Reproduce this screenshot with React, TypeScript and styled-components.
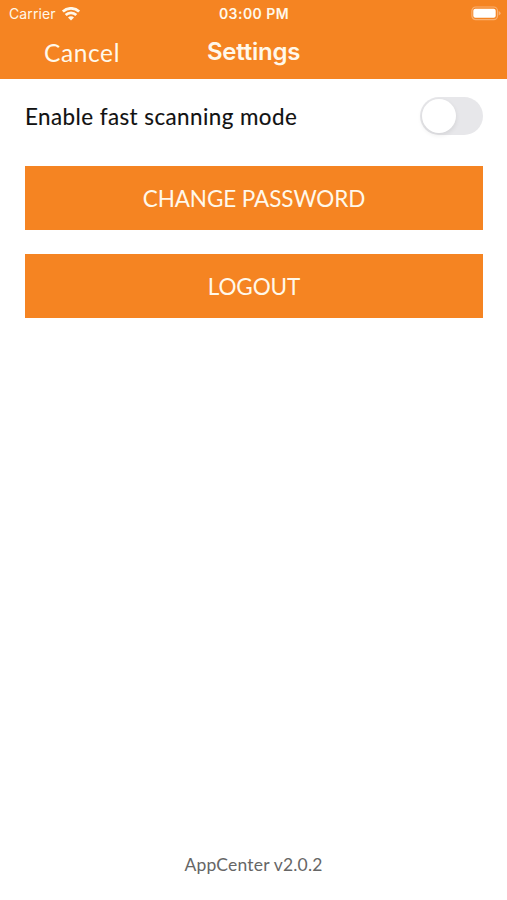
import React, { useState } from "react";
import styled, { createGlobalStyle } from "styled-components";

const ORANGE = "#f58422";

const GlobalStyle = createGlobalStyle`
  *, *::before, *::after { box-sizing: border-box; }
  body { margin: 0; background: #fff; }
`;

const Screen = styled.div`
  display: flex;
  flex-direction: column;
  width: 507px;
  height: 900px;
  background: #fff;
  font-family: Lato, "Open Sans", sans-serif;
`;

const Header = styled.header`
  height: 79px;
  background: ${ORANGE};
  color: #fff8ea;
  font-family: Inter, sans-serif;
`;

const Bar = styled.div<{ $height: number }>`
  display: grid;
  grid-template-columns: 1fr auto 1fr;
  align-items: center;
  height: ${(p) => p.$height}px;
`;

const Carrier = styled.div`
  display: flex;
  align-items: center;
  gap: 6px;
  padding-left: 9px;
  font-size: 14px;
  letter-spacing: 0.1px;
`;

const Clock = styled.div`
  padding-left: 1px;
  font-size: 14px;
  font-weight: 600;
  letter-spacing: 0.45px;
`;

const Power = styled.div`
  display: flex;
  justify-content: flex-end;
  padding-right: 6px;
`;

const CancelButton = styled.button`
  justify-self: start;
  margin: 1px 0 0 44px;
  padding: 0;
  border: 0;
  background: none;
  color: inherit;
  font: 400 24.5px/30px Lato, sans-serif;
  letter-spacing: 0.6px;
`;

const Title = styled.h1`
  margin: 0;
  font-size: 24px;
  line-height: 30px;
  font-weight: 600;
  letter-spacing: -0.25px;
`;

const Content = styled.main`
  display: flex;
  flex: 1;
  flex-direction: column;
  gap: 24px;
  padding: 18px 24px 0 25px;
`;

const SettingRow = styled.label`
  display: flex;
  align-items: center;
  justify-content: space-between;
  height: 38px;
  margin-bottom: 7px;
  color: #111;
`;

const SettingName = styled.span`
  font-size: 22.4px;
  letter-spacing: 0.44px;
  -webkit-text-stroke: 0.15px #111;
`;

const Track = styled.button<{ $on: boolean }>`
  display: flex;
  justify-content: ${(p) => (p.$on ? "flex-end" : "flex-start")};
  width: 63px;
  height: 38px;
  padding: 2px;
  border: 0;
  border-radius: 19px;
  background: ${(p) => (p.$on ? ORANGE : "#e7e7ea")};
`;

const Knob = styled.span`
  width: 34px;
  height: 34px;
  border-radius: 50%;
  background: #fff;
  box-shadow: 0 2px 5px rgba(0, 0, 0, 0.09);
`;

const ActionButton = styled.button`
  height: 64px;
  padding: 1px 0 0;
  border: 0;
  background: ${ORANGE};
  color: #fff8ea;
  font: 400 22.5px/63px Lato, sans-serif;
  letter-spacing: -0.1px;
`;

const Version = styled.footer`
  height: 48px;
  color: #666;
  font-size: 17.5px;
  line-height: 26px;
  letter-spacing: 0.2px;
  text-align: center;
`;

const WifiIcon = () => (
  <svg width="18" height="14" viewBox="0 0 18 14" fill="none" stroke="#fff8ea" strokeWidth="2.7">
    <path d="M0.9 4.6A11.6 11.6 0 0 1 17.1 4.6" />
    <path d="M3.7 8A7.5 7.5 0 0 1 14.3 8" />
    <path d="M9 13.6L6 10.6A4.2 4.2 0 0 1 12 10.6Z" fill="#fff8ea" stroke="none" />
  </svg>
);

const BatteryIcon = () => (
  <svg width="30" height="15" viewBox="0 0 30 15">
    <rect x="0.9" y="1" width="25.6" height="12.6" rx="3.8" fill="none" stroke="#f9b072" strokeWidth="1.2" />
    <rect x="2.3" y="2.8" width="22.4" height="9" rx="2" fill="#fff" />
    <path d="M27.7 5.1Q29.6 5.9 29.6 7.3T27.7 9.5Z" fill="#f9b072" />
  </svg>
);

export default function App() {
  const [fastScan, setFastScan] = useState(false);
  return (
    <>
      <GlobalStyle />
      <Screen>
        <Header>
          <Bar $height={27}>
            <Carrier>
              Carrier <WifiIcon />
            </Carrier>
            <Clock>03:00 PM</Clock>
            <Power>
              <BatteryIcon />
            </Power>
          </Bar>
          <Bar $height={50}>
            <CancelButton>Cancel</CancelButton>
            <Title>Settings</Title>
          </Bar>
        </Header>
        <Content>
          <SettingRow>
            <SettingName>Enable fast scanning mode</SettingName>
            <Track
              type="button"
              role="switch"
              aria-checked={fastScan}
              $on={fastScan}
              onClick={() => setFastScan(!fastScan)}
            >
              <Knob />
            </Track>
          </SettingRow>
          <ActionButton>CHANGE PASSWORD</ActionButton>
          <ActionButton>LOGOUT</ActionButton>
        </Content>
        <Version>AppCenter v2.0.2</Version>
      </Screen>
    </>
  );
}
